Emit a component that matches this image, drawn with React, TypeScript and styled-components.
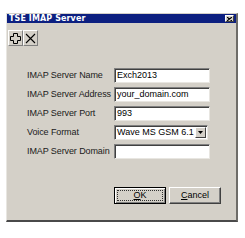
import React from "react";
import styled, { createGlobalStyle } from "styled-components";

const Global = createGlobalStyle`
  html, body { margin: 0; padding: 0; background: #ffffff; }
  body { font-family: "Liberation Sans", Arial, sans-serif; }
`;

const Window = styled.div`
  box-sizing: border-box;
  margin: 13px 0 0 6px;
  width: 232px;
  height: 209px;
  background: #d4d0c8;
  border-left: 1px solid #e8e6e1;
  border-top: 1px solid #d4d0c8;
  border-right: 2px solid #6e6c68;
  border-bottom: 2px solid #4a4a4a;
  display: flex;
  flex-direction: column;
`;

const TitleBar = styled.div`
  height: 9px;
  background: #0c1f80;
  display: flex;
  align-items: center;
  justify-content: space-between;
  padding: 0 2px 0 2px;
`;

const TitleText = styled.span`
  color: #ffffff;
  font-family: "DejaVu Sans", sans-serif;
  font-weight: bold;
  font-size: 8px;
  line-height: 9px;
  letter-spacing: 0.1px;
`;

const CloseBtn = styled.div`
  box-sizing: border-box;
  width: 9px;
  height: 7px;
  background: #d4d0c8;
  border-top: 1px solid #ffffff;
  border-left: 1px solid #ffffff;
  border-right: 1px solid #404040;
  border-bottom: 1px solid #404040;
  display: flex;
  align-items: center;
  justify-content: center;
`;

const Toolbar = styled.div`
  display: flex;
  gap: 0;
  padding: 7px 0 0 1px;
`;

const ToolButton = styled.div`
  box-sizing: border-box;
  width: 15px;
  height: 16px;
  background: #d4d0c8;
  border-top: 1px solid #ffffff;
  border-left: 1px solid #ffffff;
  border-right: 1px solid #808080;
  border-bottom: 1px solid #808080;
  display: flex;
  align-items: center;
  justify-content: center;
`;

const Form = styled.div`
  display: grid;
  grid-template-columns: 87px 96px;
  grid-auto-rows: 15px;
  row-gap: 4px;
  padding: 22px 0 0 20px;
`;

const Label = styled.div`
  font-size: 9px;
  color: #1a1a1a;
  line-height: 15px;
  white-space: nowrap;
  letter-spacing: -0.1px;
`;

const Field = styled.div`
  box-sizing: border-box;
  height: 15px;
  background: #ffffff;
  border-top: 1px solid #808080;
  border-left: 1px solid #808080;
  border-right: 1px solid #e8e6e1;
  border-bottom: 1px solid #e8e6e1;
  box-shadow: inset 1px 1px 0 #404040;
  font-size: 9px;
  line-height: 13px;
  padding-left: 2px;
  color: #000000;
  white-space: nowrap;
  overflow: hidden;
`;

const Select = styled(Field)<{ $w: number }>`
  width: ${(p) => p.$w}px;
  display: flex;
  justify-content: space-between;
  padding-right: 1px;
`;

const DropBtn = styled.div`
  box-sizing: border-box;
  width: 11px;
  height: 11px;
  margin-top: 1px;
  background: #d4d0c8;
  border-top: 1px solid #ffffff;
  border-left: 1px solid #ffffff;
  border-right: 1px solid #404040;
  border-bottom: 1px solid #404040;
  display: flex;
  align-items: center;
  justify-content: center;
`;

const Buttons = styled.div`
  display: flex;
  justify-content: flex-end;
  gap: 3px;
  padding: 28px 15px 0 0;
`;

const Button = styled.div<{ $default?: boolean }>`
  box-sizing: border-box;
  width: 52px;
  height: 17px;
  background: #d4d0c8;
  border-top: 1px solid ${(p) => (p.$default ? "#000" : "#ffffff")};
  border-left: 1px solid ${(p) => (p.$default ? "#000" : "#ffffff")};
  border-right: 1px solid ${(p) => (p.$default ? "#000" : "#404040")};
  border-bottom: 1px solid ${(p) => (p.$default ? "#000" : "#404040")};
  box-shadow: ${(p) =>
    p.$default
      ? "inset 1px 1px 0 #ffffff, inset -1px -1px 0 #808080"
      : "inset -1px -1px 0 #808080"};
  font-size: 9px;
  color: #000;
  display: flex;
  align-items: center;
  justify-content: center;
  padding: 2px;
`;

const Focus = styled.div`
  box-sizing: border-box;
  width: 100%;
  height: 100%;
  border: 1px dotted #303030;
  display: flex;
  align-items: center;
  justify-content: center;
  line-height: 9px;
`;

const Caption = styled.span`
  line-height: 9px;
`;

const U = styled.span`
  text-decoration: underline;
`;

const rows: { label: string; value: string }[] = [
  { label: "IMAP Server Name", value: "Exch2013" },
  { label: "IMAP Server Address", value: "your_domain.com" },
  { label: "IMAP Server Port", value: "993" },
];

export default function App() {
  return (
    <>
      <Global />
      <Window>
        <TitleBar>
          <TitleText>TSE IMAP Server</TitleText>
          <CloseBtn>
            <svg width="5" height="4" viewBox="0 0 5 4">
              <path d="M0 0L5 4M5 0L0 4" stroke="#000" strokeWidth="1.1" />
            </svg>
          </CloseBtn>
        </TitleBar>
        <Toolbar>
          <ToolButton>
            <svg width="11" height="11" viewBox="0 0 11 11">
              <path
                d="M3.5 0.5H7.5V3.5H10.5V7.5H7.5V10.5H3.5V7.5H0.5V3.5H3.5Z"
                fill="none"
                stroke="#000"
                strokeWidth="1"
              />
            </svg>
          </ToolButton>
          <ToolButton>
            <svg width="11" height="11" viewBox="0 0 11 11">
              <path d="M1 1L10 10M10 1L1 10" stroke="#000" strokeWidth="1.1" />
            </svg>
          </ToolButton>
        </Toolbar>
        <Form>
          {rows.map((r) => (
            <React.Fragment key={r.label}>
              <Label>{r.label}</Label>
              <Field>{r.value}</Field>
            </React.Fragment>
          ))}
          <Label>Voice Format</Label>
          <Select $w={94}>
            <span>Wave MS GSM 6.1</span>
            <DropBtn>
              <svg width="5" height="3" viewBox="0 0 5 3">
                <path d="M0 0H5L2.5 3Z" fill="#000" />
              </svg>
            </DropBtn>
          </Select>
          <Label>IMAP Server Domain</Label>
          <Field />
        </Form>
        <Buttons>
          <Button $default>
            <Focus>
              <U>O</U>K
            </Focus>
          </Button>
          <Button>
            <Caption>
              <U>C</U>ancel
            </Caption>
          </Button>
        </Buttons>
      </Window>
    </>
  );
}
